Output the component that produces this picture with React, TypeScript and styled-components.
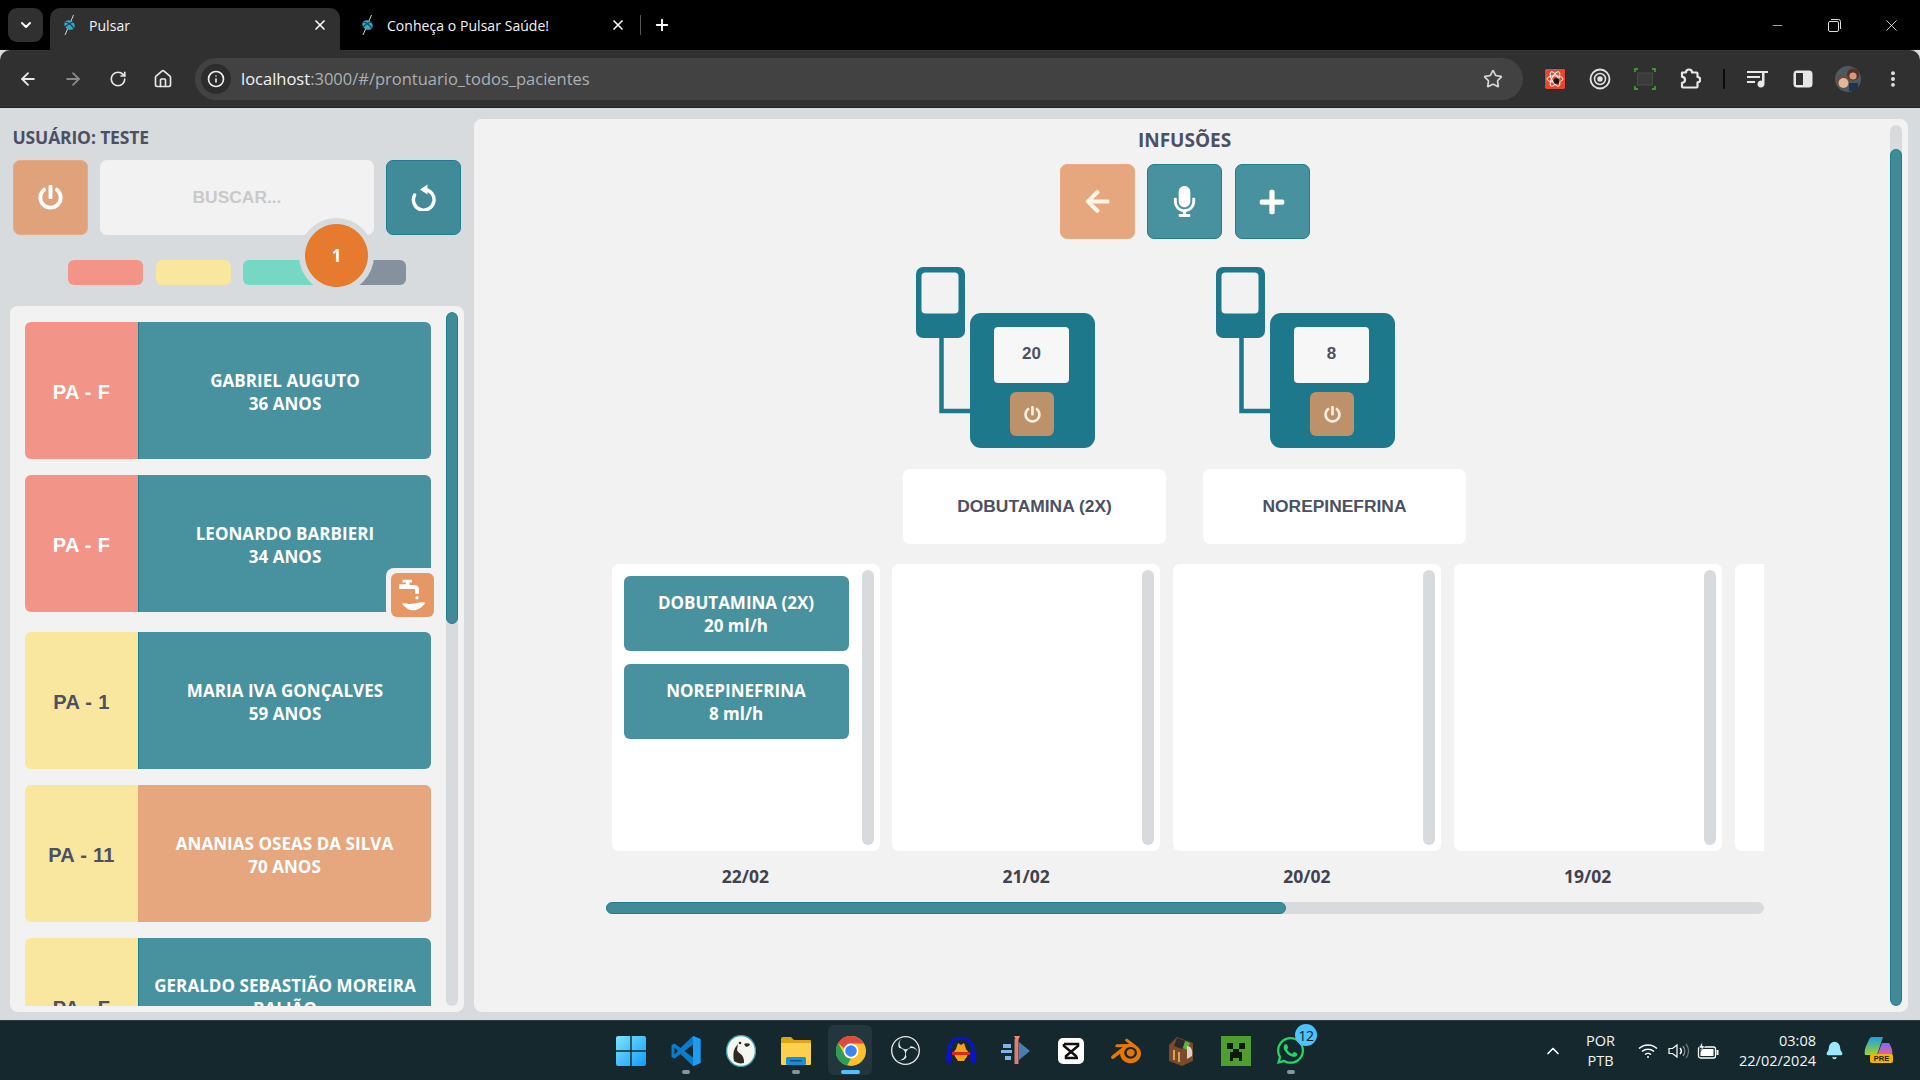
import React from "react";
import styled, { createGlobalStyle } from "styled-components";
import {
  ArrowLeft, ArrowRight, RotateCw, Home, Star, X, Plus, Minus, MoreVertical, ChevronDown, ChevronUp, Info, Bell,
} from "lucide-react";
import { FaPowerOff, FaArrowLeft, FaMicrophone, FaPlus, FaWhatsapp } from "react-icons/fa";
import { SiObsstudio, SiBlender } from "react-icons/si";

const UI = `"Open Sans", "Noto Sans", sans-serif`;
const ARIAL = `"Liberation Sans", Arial, sans-serif`;
const TEAL = "#48919f";
const TEAL_DARK = "#418b99";
const EDGE = "#1f7f8f";
const PEACH = "#e6a77f";
const PAGE = "#d8dbde";
const PANEL = "#f2f2f2";
const INK = "#4b5063";

const Global = createGlobalStyle`
  html, body { margin: 0; padding: 0; height: 100%; overflow: hidden; background: ${PAGE}; }
  * { box-sizing: border-box; }
  #root { width: 1920px; height: 1080px; }
`;

const Screen = styled.div`
  width: 1920px; height: 1080px; display: flex; flex-direction: column; overflow: hidden; font-family: ${UI};
`;

/* ---------- browser frame ---------- */
const TabStrip = styled.div`
  height: 50px; flex: none; background: #000; display: flex; align-items: flex-end; padding-left: 8px; color: #fff; position: relative;
`;
const TabMenu = styled.div`
  width: 35px; height: 34px; margin-bottom: 8px; border-radius: 9px; background: #303030; display: flex; align-items: center; justify-content: center; margin-right: 7px;
`;
const Tab = styled.div<{ $active?: boolean }>`
  width: 290px; height: 42px; flex: none; display: flex; align-items: center; padding: 0 12px 8px 12px; border-radius: 10px 10px 0 0; font-size: 14px;
  letter-spacing: 0.05px; margin-right: ${(p) => (p.$active ? "8px" : "0")};
  background: ${(p) => (p.$active ? "#303030" : "transparent")};
  svg.fav { margin-right: 11px; flex: none; }
`;
const TabTitle = styled.span`
  flex: 1; color: #f4f4f4; white-space: nowrap;
`;
const TabDivider = styled.div`
  width: 1px; height: 20px; background: #555; margin: 0 12px 15px 2px;
`;
const NewTab = styled.div`
  margin-bottom: 16px; display: flex;
`;
const WindowControls = styled.div`
  margin-left: auto; display: flex; align-self: stretch; align-items: center;
`;
const WinButton = styled.div`
  width: 57px; height: 48px; display: flex; align-items: center; justify-content: center;
`;
const Toolbar = styled.div`
  height: 58px; flex: none; background: #303030; border-radius: 10px 10px 0 0; display: flex; align-items: center; padding: 0 5px; border-bottom: 1px solid #222;
  color: #e6e6e6;
`;
const ToolButton = styled.div<{ $dim?: boolean }>`
  width: 45px; height: 40px; flex: none; display: flex; align-items: center; justify-content: center; color: ${(p) => (p.$dim ? "#8a8a8a" : "#e8e8e8")};
`;
const AddressBar = styled.div`
  flex: 1; height: 42px; margin: 0 10px; background: #424242; border-radius: 21px; display: flex; align-items: center; padding: 0 8px 0 6px; font-size: 16.5px; white-space: nowrap;
`;
const SiteInfo = styled.div`
  width: 30px; height: 30px; border-radius: 50%; background: #2c2c2c; display: flex; align-items: center; justify-content: center; margin-right: 10px; flex: none;
`;
const Host = styled.span`color: #f2f2f2;`;
const UrlPath = styled.span`color: #aab0b6;`;
const StarSlot = styled.div`
  margin-left: auto; margin-right: 12px; display: flex; color: #d8d8d8;
`;
const ToolSep = styled.div`
  width: 22.5px; flex: none; display: flex; justify-content: center;
  &::after { content: ""; width: 2px; height: 20px; background: #0c0c0c; }
`;

/* ---------- app ---------- */
const Workspace = styled.div`
  flex: 1; min-height: 0; display: flex; background: ${PAGE};
`;
const Sidebar = styled.aside`
  width: 474px; flex: none; position: relative; display: flex; flex-direction: column; padding-bottom: 8px;
`;
const UserName = styled.div`
  margin: 18px 0 12px 12.5px; height: 22px; line-height: 22px; font-size: 17.5px; font-weight: 700; color: ${INK}; letter-spacing: -0.15px;
`;
const ActionRow = styled.div`
  margin-left: 13px; width: 448px; height: 75px; display: flex; gap: 12px;
`;
const SquareButton = styled.button<{ $tone: "peach" | "teal" | "tealDark" | "tan" }>`
  width: 75px; height: 75px; flex: none; padding: 0; display: flex; align-items: center; justify-content: center; border-radius: 7px; cursor: pointer;
  background: ${(p) => (p.$tone === "teal" ? TEAL : p.$tone === "tealDark" ? TEAL_DARK : p.$tone === "tan" ? "#e0a27b" : PEACH)};
  border: 1px solid ${(p) => (p.$tone === "teal" || p.$tone === "tealDark" ? EDGE : "#e8ab82")};
  color: ${(p) => (p.$tone === "peach" ? "#fff6e6" : "#fff")};
`;
const Search = styled.input`
  flex: 1; min-width: 0; border: 0; outline: 0; border-radius: 7px; background: ${PANEL}; text-align: center; font: 700 17.4px ${ARIAL};
  &::placeholder { color: #c9c9c9; opacity: 1; }
`;
const FilterRow = styled.div`
  margin: 25px 0 21px 13px; width: 448px; height: 25px; display: flex; justify-content: center; gap: 12.67px;
`;
const Chip = styled.div<{ $color: string }>`
  width: 75px; height: 25px; border-radius: 6px; background: ${(p) => p.$color};
`;
const CountBadge = styled.div`
  position: absolute; left: 305px; top: 116px; width: 63px; height: 63px; border-radius: 50%; background: #e67a2f; border: 1px solid #e57b1c;
  box-shadow: 0 0 0 6px ${PAGE}; display: flex; align-items: center; justify-content: center; color: #fff; font-weight: 700; font-size: 17px;
`;
const ListPanel = styled.div`
  flex: 1; min-height: 0; margin: 0 10px; background: ${PANEL}; border-radius: 8px; display: flex; padding: 6px 6px 6px 15px; gap: 7px;
`;
const PatientList = styled.div`
  width: 414px; flex: none; overflow: hidden; padding-top: 10px; display: flex; flex-direction: column; gap: 16px;
`;
const PatientCard = styled.div<{ $care?: boolean }>`
  width: 406px; height: 137px; flex: none; display: flex; position: relative; margin-bottom: ${(p) => (p.$care ? "4px" : "0")};
`;
const Bed = styled.div<{ $color: string; $light?: boolean }>`
  width: 113px; flex: none; display: flex; align-items: center; justify-content: center; border-radius: 6px 0 0 6px; padding-top: 4px;
  background: ${(p) => p.$color}; color: ${(p) => (p.$light ? "#fff" : INK)}; font: 700 20px ${ARIAL}; letter-spacing: 0.3px; white-space: pre;
`;
const Person = styled.div<{ $tone: "teal" | "peach" }>`
  flex: 1; min-width: 0; display: flex; align-items: center; justify-content: center; text-align: center; border-radius: 0 6px 6px 0; padding: 3px 8px 0;
  background: ${(p) => (p.$tone === "teal" ? TEAL : PEACH)};
  border-left: ${(p) => (p.$tone === "teal" ? `1px solid ${EDGE}` : "0")};
  color: #fff; font-weight: 700; font-size: 17px; line-height: 23px; letter-spacing: 0.05px;
`;
const CareBadge = styled.div`
  position: absolute; right: -8px; bottom: -10px; width: 53px; height: 54px; padding: 5px; background: ${PANEL}; border-radius: 8px 0 0 0;
`;
const CareIcon = styled.div`
  width: 43px; height: 44px; border-radius: 6px; background: #e59866; display: flex; align-items: center; justify-content: center;
`;
const ScrollTrack = styled.div`
  width: 12px; flex: none; border-radius: 6px; background: ${PAGE}; display: flex; flex-direction: column; overflow: hidden;
`;
const ScrollThumb = styled.div<{ $h: number; $top?: number }>`
  height: ${(p) => p.$h}px; margin-top: ${(p) => p.$top ?? 0}px; border-radius: 6px; background: ${TEAL_DARK}; border: 1px solid ${EDGE}; flex: none;
`;

const Main = styled.main`
  flex: 1; min-width: 0; margin: 11px 12px 8px 0; background: ${PANEL}; border-radius: 8px; display: flex; padding-right: 6px;
`;
const MainBody = styled.div`
  flex: 1; min-width: 0; padding: 10px 0 0 5px; display: flex; flex-direction: column; align-items: center;
`;
const MainScroll = styled(ScrollTrack)`
  margin: 6px 0;
`;
const Title = styled.h1`
  margin: 0 0 13px; height: 22px; line-height: 22px; font-size: 19px; font-weight: 700; color: ${INK};
`;
const Actions = styled.div`
  display: flex; gap: 12.5px; margin-bottom: 28px;
`;
const PumpRow = styled.div`
  display: flex; gap: 37px; margin-bottom: 20px;
`;
const PumpGroup = styled.div`
  width: 263px; display: flex; flex-direction: column; gap: 21px;
`;
const PumpArt = styled.svg`
  display: block; margin-left: 12.5px;
`;
const DrugLabel = styled.div`
  height: 75px; background: #fff; border-radius: 7px; display: flex; align-items: center; justify-content: center; font: 700 17.4px ${ARIAL}; color: ${INK};
`;
const Timeline = styled.div`
  width: 1158px; display: flex; flex-direction: column;
`;
const Days = styled.div`
  display: flex; gap: 12.75px; padding-left: 6px; overflow: hidden;
`;
const Day = styled.div`
  width: 268px; flex: none; display: flex; flex-direction: column;
`;
const DayCard = styled.div`
  height: 287px; background: #fff; border-radius: 7px; display: flex; justify-content: space-between; padding: 6px 6px 6px 12px;
`;
const DayItems = styled.div`
  width: 225px; padding-top: 6px; display: flex; flex-direction: column; gap: 13px;
`;
const DayItem = styled.div`
  height: 75px; border-radius: 6px; background: ${TEAL}; color: #fff; text-align: center; display: flex; align-items: center; justify-content: center;
  font-weight: 700; font-size: 17px; line-height: 23px;
`;
const DayDate = styled.div`
  height: 50px; margin-bottom: 1px; display: flex; align-items: center; justify-content: center; font-weight: 700; font-size: 17.5px; color: #40424f;
`;
const HTrack = styled.div`
  height: 12px; border-radius: 6px; background: ${PAGE}; display: flex;
`;
const HThumb = styled.div`
  width: 680px; border-radius: 6px; background: ${TEAL_DARK}; border: 1px solid ${EDGE};
`;

/* ---------- taskbar ---------- */
const Taskbar = styled.footer`
  height: 60px; flex: none; background: #15282e; border-top: 1px solid #2a3a40; display: flex; align-items: center; color: #fff;
`;
const Dock = styled.div`
  margin-left: 603px; display: flex; height: 100%;
`;
const DockItem = styled.div<{ $active?: boolean }>`
  width: 55px; height: 100%; display: flex; align-items: center; justify-content: center; position: relative;
  ${(p) => p.$active && `
    &::before { content: ""; position: absolute; left: 5px; right: 6px; top: 4px; bottom: 5px; border-radius: 6px; background: #22373d; }
    &::after { content: ""; position: absolute; left: 18px; width: 19px; bottom: 6px; height: 4px; border-radius: 2px; background: #4cc2ff; }
  `}
  svg { position: relative; }
`;
const Tint = styled.span<{ $color: string }>`
  display: flex; color: ${(p) => p.$color};
`;
const RunDot = styled.span`
  position: absolute; bottom: 6px; left: 50%; margin-left: -4px; width: 8px; height: 4px; border-radius: 2px; background: #8b9599;
`;
const NotifyCount = styled.span`
  position: absolute; top: 3px; right: 1px; width: 22px; height: 22px; border-radius: 50%; background: #4cc2ff; color: #08222c; font-size: 14px; display: flex; align-items: center; justify-content: center; letter-spacing: -0.5px;
`;
const Tray = styled.div`
  margin-left: auto; display: flex; align-items: center; height: 100%; padding-right: 14px;
`;
const TrayIcon = styled.div<{ $w: number; $ml?: number }>`
  width: ${(p) => p.$w}px; margin-left: ${(p) => p.$ml ?? 0}px; display: flex; justify-content: center; align-items: center; flex: none;
`;
const TrayText = styled.div<{ $right?: boolean; $w: number; $ml?: number }>`
  width: ${(p) => p.$w}px; margin-left: ${(p) => p.$ml ?? 0}px; text-align: ${(p) => (p.$right ? "right" : "center")}; font-size: 14.5px; line-height: 19.5px; flex: none; white-space: nowrap; color: #f2f5f6;
`;

/* ---------- drawings ---------- */
const Favicon = () => (
  <svg className="fav" width="16" height="22" viewBox="0 0 16 22">
    <path d="M11.5 1 3 21" stroke="#cfd8dc" strokeWidth="1" />
    <ellipse cx="7.5" cy="11" rx="5.5" ry="4.5" fill="#3aa6c2" transform="rotate(35 7.5 11)" />
    <path d="M3 8c3 0 7 3 9 7M3 13c3-3 6-5 10-5" stroke="#12424f" strokeWidth="1.2" fill="none" />
  </svg>
);
const RefreshIcon = () => (
  <svg width="26" height="27" viewBox="0 0 26 27" fill="none">
    <path d="M13.5 5.5A10.3 10.3 0 1 1 3.6 11" stroke="#fff" strokeWidth="3.4" strokeLinecap="round" />
    <path d="M16.5 0.5v10l-7.5-5z" fill="#fff" />
  </svg>
);
const WashIcon = () => (
  <svg width="29" height="33" viewBox="0 0 33 38" fill="#fff">
    <path d="M5 1h11v3h-3v3h5c4 0 6 2 6 5v5h-4.500v-4c0-1-.5-1.500-1.500-1.500H1V6h8V4H5z" />
    <circle cx="21.700" cy="21.500" r="1.800" />
    <path d="M5 28c5-.8 6 1.200 12 .6 4-.4 7-2.600 13-1.600 1 .2 1 1 .5 1.500C26 34 22 36 17 36c-5 0-9-3.500-12-7-.4-.5-.4-1 0-1z" />
  </svg>
);
const Pump = ({ value }: { value: string }) => (
  <PumpArt width="179" height="181" viewBox="0 0 179 181">
    <path d="M25.500 70V144H56" stroke="#1e788b" strokeWidth="4.500" fill="none" />
    <rect x="0" y="0" width="49" height="71" rx="7" fill="#1e788b" />
    <rect x="5.500" y="5.500" width="37" height="41" rx="4" fill="#f2f2f2" />
    <rect x="54" y="46" width="125" height="135" rx="11" fill="#1e788b" />
    <rect x="78" y="60" width="75" height="56" rx="4" fill="#f7f7f7" />
    <text x="115.500" y="92" textAnchor="middle" fontFamily={ARIAL} fontWeight="700" fontSize="17" fill={INK}>{value}</text>
    <rect x="94" y="125" width="44" height="44" rx="6" fill="#bd9169" />
    <FaPowerOff x="108" y="139" size={17} color="#fdf0e0" />
  </PumpArt>
);
const ReactDevIcon = () => (
  <svg width="22" height="22" viewBox="0 0 22 22">
    <rect x="0.500" y="0.500" width="21" height="21" rx="2" fill="#e8472e" stroke="#16333a" />
    <g fill="none" stroke="#fff" strokeWidth="1">
      <ellipse cx="11" cy="11" rx="8" ry="3.200" />
      <ellipse cx="11" cy="11" rx="8" ry="3.200" transform="rotate(60 11 11)" />
      <ellipse cx="11" cy="11" rx="8" ry="3.200" transform="rotate(120 11 11)" />
    </g>
    <circle cx="12.500" cy="13" r="3" fill="#1a1a1a" />
  </svg>
);
const TargetIcon = () => (
  <svg width="22" height="22" viewBox="0 0 22 22" fill="none" stroke="#e2e2e2">
    <circle cx="11" cy="11" r="9.500" strokeWidth="1.800" />
    <circle cx="11" cy="11" r="5.500" strokeWidth="1.500" />
    <circle cx="11" cy="11" r="2.700" fill="#e2e2e2" stroke="none" />
  </svg>
);
const FrameIcon = () => (
  <svg width="22" height="22" viewBox="0 0 22 22" fill="none">
    <rect x="3.500" y="5" width="15" height="12" fill="#3a3a3a" stroke="#4a4a4a" />
    <path d="M1 4V1h3M18 1h3v3M21 18v3h-3M4 21H1v-3" stroke="#3c9a2e" strokeWidth="1.800" />
  </svg>
);
const ExtensionIcon = () => (
  <svg width="22" height="22" viewBox="0 0 22 22" fill="none" stroke="#e8e8e8" strokeWidth="2.200" strokeLinejoin="round">
    <path d="M3 4.500h4a3 3 0 0 1 6 0h4.500a1 1 0 0 1 1 1V9a2.700 2.700 0 0 1 0 5.400v4.100a1 1 0 0 1-1 1H4a1 1 0 0 1-1-1v-3.700a3 3 0 0 0 0-6z" />
  </svg>
);
const MusicListIcon = () => (
  <svg width="22" height="20" viewBox="0 0 22 20" fill="#e8e8e8">
    <rect x="0" y="2" width="15" height="2" />
    <rect x="0" y="7" width="13" height="2" />
    <rect x="0" y="12" width="8" height="2" />
    <path d="M15 2h6v2h-3.500v11a3.500 3.500 0 1 1-2.500-3.300z" />
  </svg>
);
const SidePanelIcon = () => (
  <svg width="20" height="18" viewBox="0 0 20 18">
    <rect x="1" y="1" width="18" height="16" rx="2.500" fill="#e8e8e8" stroke="#e8e8e8" />
    <rect x="3" y="3" width="7" height="12" fill="#303030" />
  </svg>
);
const Avatar = () => (
  <svg width="26" height="26" viewBox="0 0 26 26">
    <circle cx="13" cy="13" r="13" fill="#4b5a5e" />
    <circle cx="18" cy="8.500" r="6" fill="#5a2f22" />
    <circle cx="18" cy="10" r="3.600" fill="#d49a7e" />
    <circle cx="8" cy="15" r="6.500" fill="#6a4a38" />
    <circle cx="8.500" cy="17" r="5" fill="#e2b79c" />
    <rect x="14" y="17" width="9" height="8" fill="#24324a" />
  </svg>
);
const WindowsLogo = () => (
  <svg width="30" height="30" viewBox="0 0 30 30">
    <defs><linearGradient id="w" x1="0" y1="0" x2="1" y2="1"><stop offset="0" stopColor="#7fe3fb" /><stop offset="1" stopColor="#0f9bff" /></linearGradient></defs>
    <path d="M0 2a2 2 0 0 1 2-2h12.300v14.300H0zM15.700 0H28a2 2 0 0 1 2 2v12.300H15.700zM0 15.700h14.300V30H2a2 2 0 0 1-2-2zM15.700 15.700H30V28a2 2 0 0 1-2 2H15.700z" fill="url(#w)" />
  </svg>
);
const CodeLogo = () => (
  <svg width="32" height="32" viewBox="0 0 32 32">
    <path d="M23 1 10.500 13 4.500 8.500 1.500 10v12l3 1.500 6-4.500L23 31l7.500-3V4z" fill="#0a7ccb" />
    <path d="M23 1l7.500 3v24L23 31z" fill="#1f9cf0" />
    <path d="M23 9.500v13L14.500 16z" fill="#15282e" />
    <path d="M4.500 12.500 8 16l-3.500 3.500z" fill="#15282e" />
  </svg>
);
const BeaverLogo = () => (
  <svg width="30" height="32" viewBox="0 0 30 32">
    <ellipse cx="15" cy="16" rx="14.500" ry="15.500" fill="#f7f7f2" stroke="#3f9fa6" strokeWidth="1.500" />
    <path d="M8 26c-1-5-1-9 1-13l3-4-1 6c1 3 5 4 6 7 1 2 1 4 1 6-4 1-7 0-10-2z" fill="#2f2a26" />
    <path d="M18 9c2-1 4-1 6 0l-1 2-3 1z" fill="#2f2a26" />
    <circle cx="14" cy="8" r="1.300" fill="#2f2a26" />
  </svg>
);
const FolderLogo = () => (
  <svg width="32" height="30" viewBox="0 0 32 30">
    <path d="M1 3a2 2 0 0 1 2-2h8l3 3h16a1 1 0 0 1 1 1v3H1z" fill="#e0a410" />
    <path d="M1 7h29a1 1 0 0 1 1 1v20a1 1 0 0 1-1 1H2a1 1 0 0 1-1-1z" fill="#fbd04e" />
    <rect x="6" y="21" width="20" height="8" rx="1.500" fill="#1a8fd8" />
    <rect x="10" y="24" width="12" height="1.500" fill="#0b4f84" />
  </svg>
);
const ChromeLogo = () => (
  <svg width="30" height="30" viewBox="0 0 30 30">
    <circle cx="15" cy="15" r="15" fill="#fbc02d" />
    <path d="M15 0a15 15 0 0 1 13 7.500H15a7.500 7.500 0 0 0-7 4.800L2 7A15 15 0 0 1 15 0z" fill="#dd4b3e" />
    <path d="M2 7l6.500 11.500a7.500 7.500 0 0 0 6.500 4L11 29.500A15 15 0 0 1 2 7z" fill="#2f9e54" />
    <circle cx="15" cy="15" r="7.500" fill="#fff" />
    <circle cx="15" cy="15" r="5.800" fill="#3f84ee" />
  </svg>
);
const AudioLogo = () => (
  <svg width="32" height="32" viewBox="0 0 32 32">
    <path d="M4 24V15a12 12 0 0 1 24 0v9" fill="none" stroke="#0a12d8" strokeWidth="3" />
    <rect x="1.500" y="16" width="5" height="12" rx="2.500" fill="#0a12d8" />
    <rect x="25.500" y="16" width="5" height="12" rx="2.500" fill="#0a12d8" />
    <path d="M8 18l3-4 2-6 3 2 3-2 2 6 3 4-3 5-2 3h-6l-2-3z" fill="#f2a11c" />
    <rect x="7" y="17" width="18" height="3" fill="#e0251c" />
  </svg>
);
const FlowLogo = () => (
  <svg width="30" height="30" viewBox="0 0 30 30">
    <path d="M13 0h6l-2 4v24h-2V4z" fill="#f08a78" />
    <rect x="13.500" y="3" width="4" height="25" fill="#d98076" />
    <path d="M18 6l11 9-11 9z" fill="#4b7fb3" />
    <rect x="2" y="8" width="8" height="4" fill="#7db4ea" />
    <rect x="0" y="14" width="11" height="3" fill="#7db4ea" />
    <rect x="4" y="20" width="6" height="4" fill="#7db4ea" />
  </svg>
);
const CutLogo = () => (
  <svg width="26" height="26" viewBox="0 0 26 26">
    <rect width="26" height="26" rx="5" fill="#fff" />
    <path d="M6 6h14v2L8 18v2h12" fill="none" stroke="#111" strokeWidth="2.600" />
    <path d="M6 6v2l12 10v2" fill="none" stroke="#111" strokeWidth="2.600" />
  </svg>
);
const ChestLogo = () => (
  <svg width="28" height="30" viewBox="0 0 28 30">
    <path d="M2 9 10 1l16 6v18l-11 5-13-5z" fill="#7a4a2a" />
    <path d="M10 2l9 3-4 8-8-3z" fill="#2a2a28" />
    <path d="M18 5l5 2-3 7-4-2z" fill="#5fae4a" />
    <path d="M20 10c4 0 6 4 5 10l-5 3z" fill="#d8d4c8" />
    <rect x="6" y="14" width="2" height="10" fill="#d6a35a" />
    <rect x="11" y="16" width="2" height="10" fill="#d6a35a" />
  </svg>
);
const CreeperLogo = () => (
  <svg width="30" height="30" viewBox="0 0 30 30">
    <rect width="30" height="30" fill="#4f9e2f" />
    <path d="M6 7h6v6H6zM18 7h6v6h-6zM12 13h6v3h3v9h-3v-3h-6v3H9v-9h3z" fill="#0c1a0a" />
  </svg>
);
const WifiIcon = () => (
  <svg width="20" height="16" viewBox="0 0 20 16" fill="none" stroke="#fff" strokeWidth="1.500">
    <path d="M1 5.500a13 13 0 0 1 18 0M4 8.500a9 9 0 0 1 12 0M7 11.500a4.500 4.500 0 0 1 6 0" />
    <circle cx="10" cy="14" r="1" fill="#fff" stroke="none" />
  </svg>
);
const SpeakerIcon = () => (
  <svg width="22" height="18" viewBox="0 0 22 18" fill="none" stroke="#fff" strokeWidth="1.200">
    <path d="M1 6.500h3.500L9 3v12l-4.500-3.500H1z" />
    <path d="M12 6a4.500 4.500 0 0 1 0 6" strokeWidth="1.500" />
    <path d="M15 4a8 8 0 0 1 0 10" stroke="#9aa3a6" />
    <path d="M18 2a11 11 0 0 1 0 14" stroke="#6f7a7d" />
  </svg>
);
const BatteryIcon = () => (
  <svg width="22" height="18" viewBox="0 0 22 18">
    <rect x="1.500" y="5" width="17" height="11" rx="2" fill="none" stroke="#fff" strokeWidth="1.300" />
    <rect x="3.500" y="7" width="13" height="7" fill="#fff" />
    <rect x="19.500" y="8" width="2" height="5" fill="#fff" />
    <path d="M5 0 2 6h2.500L3 10l5-6H5.500z" fill="#fff" stroke="#15282e" strokeWidth="0.600" />
  </svg>
);
const CopilotLogo = () => (
  <svg width="30" height="28" viewBox="0 0 30 28">
    <defs>
      <linearGradient id="c1" x1="0" y1="0" x2="0" y2="1"><stop offset="0" stopColor="#1aa0e0" /><stop offset="1" stopColor="#a6d22c" /></linearGradient>
      <linearGradient id="c2" x1="0" y1="0" x2="0" y2="1"><stop offset="0" stopColor="#7d6cf0" /><stop offset="1" stopColor="#f05fa0" /></linearGradient>
    </defs>
    <path d="M8 0h11l-6 18H1c-1-5 1-9 3-13 1-3 2-5 4-5z" fill="url(#c1)" />
    <path d="M18 6h7c3 5 4 8 3 13H13z" fill="url(#c2)" />
    <rect x="6" y="17" width="23" height="9" rx="2" fill="#f0b400" />
    <text x="17.500" y="24.200" textAnchor="middle" fontFamily={ARIAL} fontWeight="700" fontSize="7.500" fill="#221a00">PRE</text>
  </svg>
);

const patients = [
  { bed: "PA - F", hot: true, color: "#f29488", name: "GABRIEL AUGUTO", age: "36 ANOS", tone: "teal" as const },
  { bed: "PA - F", hot: true, color: "#f29488", name: "LEONARDO BARBIERI", age: "34 ANOS", tone: "teal" as const, care: true },
  { bed: "PA - 1", color: "#f9e79f", name: "MARIA IVA GONÇALVES", age: "59 ANOS", tone: "teal" as const },
  { bed: "PA - 11", color: "#f9e79f", name: "ANANIAS OSEAS DA SILVA", age: "70 ANOS", tone: "peach" as const },
  { bed: "PA - F", color: "#f9e79f", name: "GERALDO SEBASTIÃO MOREIRA BALIÃO", age: "\u00a0", tone: "teal" as const },
];
const days = [
  { date: "22/02", items: [["DOBUTAMINA (2X)", "20 ml/h"], ["NOREPINEFRINA", "8 ml/h"]] },
  { date: "21/02", items: [] },
  { date: "20/02", items: [] },
  { date: "19/02", items: [] },
  { date: "\u00a0", items: [] },
];
const dock: { node: React.ReactNode; run?: boolean; active?: boolean; count?: string }[] = [
  { node: <WindowsLogo /> },
  { node: <CodeLogo />, run: true },
  { node: <BeaverLogo /> },
  { node: <FolderLogo />, run: true },
  { node: <ChromeLogo />, active: true },
  { node: <Tint $color="#e8e8e8"><SiObsstudio size={29} /></Tint> },
  { node: <AudioLogo /> },
  { node: <FlowLogo /> },
  { node: <CutLogo /> },
  { node: <Tint $color="#ea7600"><SiBlender size={30} /></Tint> },
  { node: <ChestLogo /> },
  { node: <CreeperLogo /> },
  { node: <Tint $color="#25d366"><FaWhatsapp size={31} /></Tint>, run: true, count: "12" },
];

export default function App() {
  return (
    <Screen>
      <Global />
      <TabStrip>
        <TabMenu><ChevronDown size={16} strokeWidth={3} /></TabMenu>
        <Tab $active>
          <Favicon />
          <TabTitle>Pulsar</TabTitle>
          <X size={16} strokeWidth={2.5} />
        </Tab>
        <Tab>
          <Favicon />
          <TabTitle>Conheça o Pulsar Saúde!</TabTitle>
          <X size={16} strokeWidth={2.5} />
        </Tab>
        <TabDivider />
        <NewTab><Plus size={18} strokeWidth={2.5} /></NewTab>
        <WindowControls>
          <WinButton><Minus size={15} strokeWidth={1} /></WinButton>
          <WinButton>
            <svg width="13" height="13" viewBox="0 0 13 13" fill="none" stroke="#ddd"><rect x="0.500" y="2.500" width="10" height="10" rx="1.500" /><path d="M3 .5h7.500a2 2 0 0 1 2 2V10" /></svg>
          </WinButton>
          <WinButton><X size={19} strokeWidth={1} /></WinButton>
        </WindowControls>
      </TabStrip>
      <Toolbar>
        <ToolButton><ArrowLeft size={20} strokeWidth={2.2} /></ToolButton>
        <ToolButton $dim><ArrowRight size={20} strokeWidth={2.2} /></ToolButton>
        <ToolButton><RotateCw size={18} strokeWidth={2.2} /></ToolButton>
        <ToolButton><Home size={20} strokeWidth={2} /></ToolButton>
        <AddressBar>
          <SiteInfo><Info size={18} strokeWidth={2.2} color="#eee" /></SiteInfo>
          <Host>localhost</Host><UrlPath>:3000/#/prontuario_todos_pacientes</UrlPath>
          <StarSlot><Star size={20} strokeWidth={2} /></StarSlot>
        </AddressBar>
        <ToolButton><ReactDevIcon /></ToolButton>
        <ToolButton><TargetIcon /></ToolButton>
        <ToolButton><FrameIcon /></ToolButton>
        <ToolButton><ExtensionIcon /></ToolButton>
        <ToolSep />
        <ToolButton><MusicListIcon /></ToolButton>
        <ToolButton><SidePanelIcon /></ToolButton>
        <ToolButton><Avatar /></ToolButton>
        <ToolButton><MoreVertical size={20} strokeWidth={2.6} /></ToolButton>
      </Toolbar>

      <Workspace>
        <Sidebar>
          <UserName>USUÁRIO: TESTE</UserName>
          <ActionRow>
            <SquareButton $tone="tan"><FaPowerOff size={25} /></SquareButton>
            <Search placeholder="BUSCAR..." />
            <SquareButton $tone="tealDark"><RefreshIcon /></SquareButton>
          </ActionRow>
          <FilterRow>
            <Chip $color="#f29488" />
            <Chip $color="#f9e79f" />
            <Chip $color="#76d7c4" />
            <Chip $color="#85929e" />
          </FilterRow>
          <CountBadge>1</CountBadge>
          <ListPanel>
            <PatientList>
              {patients.map((p) => (
                <PatientCard key={p.name} $care={p.care}>
                  <Bed $color={p.color} $light={p.hot}>{p.bed}</Bed>
                  <Person $tone={p.tone}>
                    <div>{p.name}<br />{p.age}</div>
                  </Person>
                  {p.care && <CareBadge><CareIcon><WashIcon /></CareIcon></CareBadge>}
                </PatientCard>
              ))}
            </PatientList>
            <ScrollTrack><ScrollThumb $h={312} /></ScrollTrack>
          </ListPanel>
        </Sidebar>

        <Main>
          <MainBody>
            <Title>INFUSÕES</Title>
            <Actions>
              <SquareButton $tone="peach"><FaArrowLeft size={27} /></SquareButton>
              <SquareButton $tone="teal"><FaMicrophone size={31} /></SquareButton>
              <SquareButton $tone="teal"><FaPlus size={28} /></SquareButton>
            </Actions>
            <PumpRow>
              <PumpGroup><Pump value="20" /><DrugLabel>DOBUTAMINA (2X)</DrugLabel></PumpGroup>
              <PumpGroup><Pump value="8" /><DrugLabel>NOREPINEFRINA</DrugLabel></PumpGroup>
            </PumpRow>
            <Timeline>
              <Days>
                {days.map((d, i) => (
                  <Day key={i}>
                    <DayCard>
                      <DayItems>
                        {d.items.map(([drug, rate]) => (
                          <DayItem key={drug}><div>{drug}<br />{rate}</div></DayItem>
                        ))}
                      </DayItems>
                      <ScrollTrack />
                    </DayCard>
                    <DayDate>{d.date}</DayDate>
                  </Day>
                ))}
              </Days>
              <HTrack><HThumb /></HTrack>
            </Timeline>
          </MainBody>
          <MainScroll><ScrollThumb $h={857} $top={24} /></MainScroll>
        </Main>
      </Workspace>

      <Taskbar>
        <Dock>
          {dock.map((d, i) => (
            <DockItem key={i} $active={d.active}>
              {d.node}
              {d.run && <RunDot />}
              {d.count && <NotifyCount>{d.count}</NotifyCount>}
            </DockItem>
          ))}
        </Dock>
        <Tray>
          <TrayIcon $w={30}><ChevronUp size={20} strokeWidth={2} /></TrayIcon>
          <TrayText $w={50} $ml={8}>POR<br />PTB</TrayText>
          <TrayIcon $w={36} $ml={4}><WifiIcon /></TrayIcon>
          <TrayIcon $w={26}><SpeakerIcon /></TrayIcon>
          <TrayIcon $w={32}><BatteryIcon /></TrayIcon>
          <TrayText $right $w={92.5}>03:08<br />22/02/2024</TrayText>
          <TrayIcon $w={36}><Bell size={19} fill="#9be8ff" color="#9be8ff" /></TrayIcon>
          <TrayIcon $w={54}><CopilotLogo /></TrayIcon>
        </Tray>
      </Taskbar>
    </Screen>
  );
}
